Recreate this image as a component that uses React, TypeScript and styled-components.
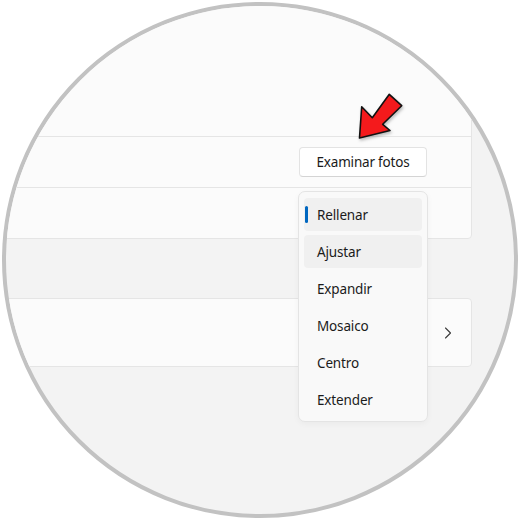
import React from "react";
import styled, { createGlobalStyle } from "styled-components";

const GlobalStyle = createGlobalStyle`
  html, body { margin: 0; padding: 0; background: #ffffff; }
  body { font-family: "Noto Sans", "Open Sans", sans-serif; }
  * { box-sizing: border-box; }
`;

const Frame = styled.div`
  position: relative;
  width: 520px;
  height: 520px;
  display: flex;
  align-items: center;
  justify-content: center;
  background: #ffffff;
`;

const Lens = styled.div`
  position: relative;
  width: 516px;
  height: 516px;
  border: 4px solid #c2c2c2;
  border-radius: 50%;
  overflow: hidden;
  background: #f3f3f3;
`;

const Screen = styled.div`
  display: flex;
  flex-direction: column;
  margin-left: -20px;
  padding-right: 42px;
  margin-top: -10px;
`;

const Card = styled.div<{ $gap?: number }>`
  display: flex;
  flex-direction: column;
  background: #fbfbfb;
  border: 1px solid #e5e5e5;
  border-radius: 4px;
  margin-top: ${(p) => p.$gap ?? 0}px;
`;

const Row = styled.div<{ $h: number; $divider?: boolean }>`
  height: ${(p) => p.$h}px;
  display: flex;
  align-items: center;
  justify-content: flex-end;
  padding-right: 44px;
  border-bottom: ${(p) => (p.$divider ? "1px solid #e5e5e5" : "none")};
`;

const ChevronRow = styled(Row)`
  padding-right: 19px;
`;

const Button = styled.button`
  width: 128px;
  height: 30px;
  background: #ffffff;
  border: 1px solid #e3e3e3;
  border-bottom-color: #d4d4d4;
  border-radius: 4px;
  font-family: "Noto Sans", "Open Sans", sans-serif;
  font-size: 13.5px;
  letter-spacing: -0.2px;
  color: #1b1b1b;
  padding: 0;
  display: flex;
  align-items: center;
  justify-content: center;
`;

const Menu = styled.div`
  position: absolute;
  left: 292px;
  top: 185px;
  width: 130px;
  display: flex;
  flex-direction: column;
  gap: 4px;
  padding: 6px 5px 5px 5px;
  background: #f9f9f9;
  border: 1px solid #e4e4e4;
  border-radius: 7px;
  box-shadow: 0 2px 6px rgba(0, 0, 0, 0.04);
`;

const Item = styled.div<{ $active?: boolean; $hover?: boolean }>`
  position: relative;
  height: 33px;
  display: flex;
  align-items: center;
  padding-left: 13px;
  border-radius: 4px;
  font-size: 13.5px;
  letter-spacing: -0.15px;
  color: #1b1b1b;
  background: ${(p) => (p.$active || p.$hover ? "#f0f0f0" : "transparent")};
`;

const Indicator = styled.span`
  position: absolute;
  left: 1px;
  top: 8px;
  width: 3px;
  height: 17px;
  border-radius: 2px;
  background: #0067c0;
`;

const ArrowSvg = styled.svg`
  position: absolute;
  left: 350px;
  top: 86px;
  width: 60px;
  height: 60px;
  overflow: visible;
  filter: drop-shadow(1px 2px 1.5px rgba(0, 0, 0, 0.25));
`;

const items = ["Rellenar", "Ajustar", "Expandir", "Mosaico", "Centro", "Extender"];

export default function App() {
  return (
    <>
      <GlobalStyle />
      <Frame>
        <Lens>
          <Screen>
            <Card>
              <Row $h={140} $divider />
              <Row $h={51} $divider>
                <Button>Examinar fotos</Button>
              </Row>
              <Row $h={50} />
            </Card>
            <Card $gap={59}>
              <ChevronRow $h={67}>
                <svg width="8" height="12" viewBox="0 0 8 12">
                  <path d="M1.5 1 L6.5 6 L1.5 11" fill="none" stroke="#3a3a3a" strokeWidth="1.1" strokeLinecap="round" strokeLinejoin="round" />
                </svg>
              </ChevronRow>
            </Card>
          </Screen>
          <Menu>
            {items.map((t, i) => (
              <Item key={t} $active={i === 0} $hover={i === 1}>
                {i === 0 && <Indicator />}
                {t}
              </Item>
            ))}
          </Menu>
        </Lens>
        <ArrowSvg viewBox="350 86 60 60">
          <polygon
            points="359.5,138 361.7,106.7 372.3,117.7 389.3,94.3 401.7,105.7 382.7,124.3 390,130.5"
            fill="#f41a1c"
            stroke="#111111"
            strokeWidth="1.6"
            strokeLinejoin="round"
          />
        </ArrowSvg>
      </Frame>
    </>
  );
}
